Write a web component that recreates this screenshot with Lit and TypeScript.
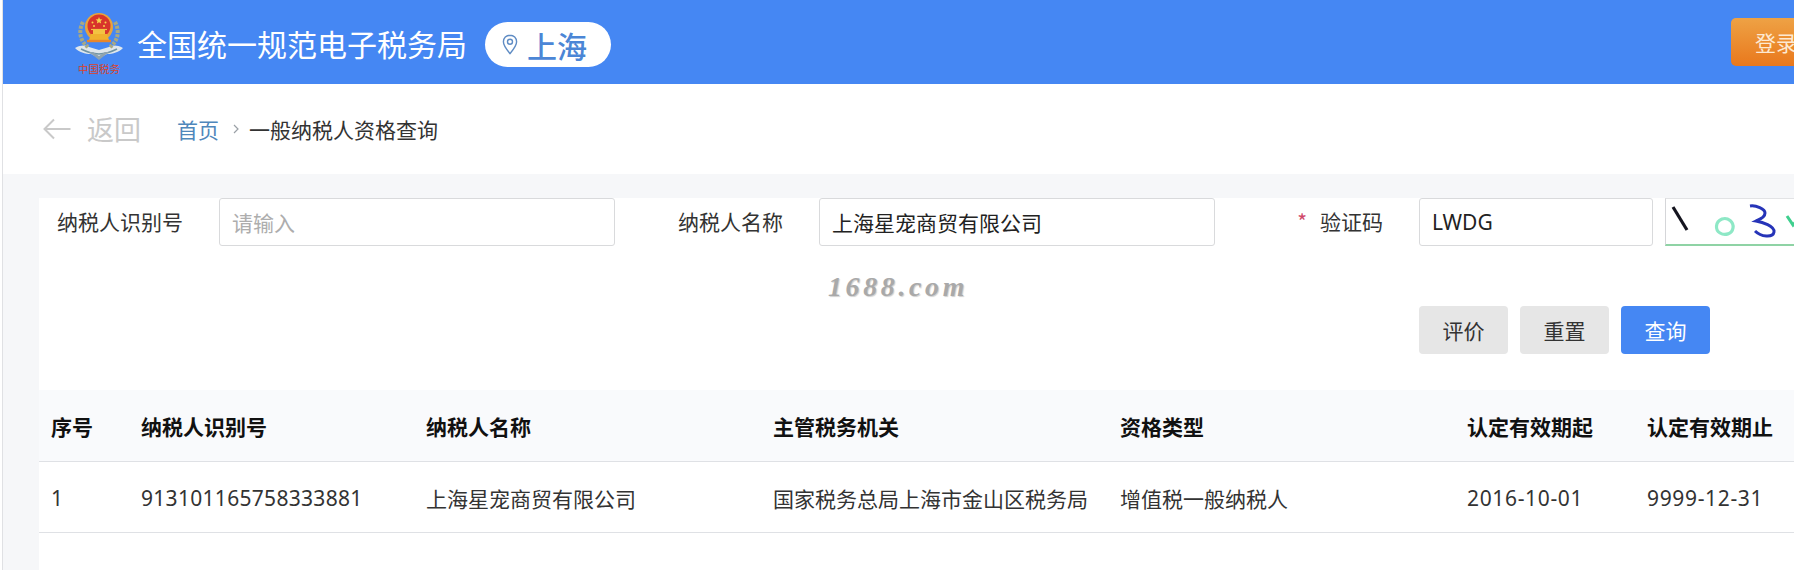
import { LitElement, html, css, svg } from "lit";
import { customElement } from "lit/decorators.js";

const headers = ["序号", "纳税人识别号", "纳税人名称", "主管税务机关", "资格类型", "认定有效期起", "认定有效期止"];
const row = [
  { text: "1", kind: "" },
  { text: "913101165758333881", kind: "id" },
  { text: "上海星宠商贸有限公司", kind: "" },
  { text: "国家税务总局上海市金山区税务局", kind: "" },
  { text: "增值税一般纳税人", kind: "" },
  { text: "2016-10-01", kind: "date" },
  { text: "9999-12-31", kind: "date" },
];

const emblem = svg`
<svg class="emblem" viewBox="0 0 48 62" width="48" height="62" aria-hidden="true">
  <path d="M0 35 C6 32 10 32 14 34 L24 37 L34 34 C38 32 42 32 48 35 C44 39 38 41 32 41 L24 45 L16 41 C10 41 4 39 0 35Z" fill="#dfe7ec"/>
  <path d="M6 36 C12 39 18 41 24 41 C30 41 36 39 42 36" fill="none" stroke="#6f93a3" stroke-width="1.6"/>
  <path d="M14 39 L24 47 L34 39 L30 39 L24 43 L18 39Z" fill="#8fa3ae"/>
  <path d="M8 9 C3 18 5 28 13 34" fill="none" stroke="#a8a983" stroke-width="4" stroke-dasharray="3 1.2"/>
  <path d="M40 9 C45 18 43 28 35 34" fill="none" stroke="#a8a983" stroke-width="4" stroke-dasharray="3 1.2"/>
  <circle cx="24" cy="14" r="14" fill="#e9a33b"/>
  <circle cx="24" cy="13" r="11.5" fill="#d8352c"/>
  <path d="M16 21 L32 21 L34 27 L14 27Z" fill="#f0b12e"/>
  <path d="M18 17 H30 V21 H18Z" fill="#f3c342"/>
  <path d="M16 16.5 H32" stroke="#f3c342" stroke-width="1.2"/>
  <path d="M12 28 H36" stroke="#e8862a" stroke-width="2.4"/>
  <path d="M24 4 l1 2.2 2.4.3 -1.8 1.6 .5 2.4 -2.1-1.2 -2.1 1.2 .5-2.4 -1.8-1.6 2.4-.3Z" fill="#f7d34a"/>
  <circle cx="17.5" cy="9.5" r="1" fill="#f7d34a"/><circle cx="30.5" cy="9.5" r="1" fill="#f7d34a"/>
  <circle cx="19" cy="13" r="1" fill="#f7d34a"/><circle cx="29" cy="13" r="1" fill="#f7d34a"/>
  <text x="24" y="60" text-anchor="middle" font-size="10" textLength="42" lengthAdjust="spacingAndGlyphs" fill="#d9432c" font-family="'Noto Sans CJK SC', sans-serif">中国税务</text>
</svg>`;

const pin = svg`
<svg class="pin" viewBox="0 0 16 21" width="16" height="21" aria-hidden="true">
  <path d="M8 1.2 C4.2 1.2 1.4 4.1 1.4 7.8 C1.4 12 5.6 16.6 8 19.6 C10.4 16.6 14.6 12 14.6 7.8 C14.6 4.1 11.8 1.2 8 1.2Z" fill="none" stroke="#5f8cc4" stroke-width="1.4"/>
  <circle cx="8" cy="7.8" r="2.5" fill="none" stroke="#5f8cc4" stroke-width="1.4"/>
</svg>`;

const backArrow = svg`
<svg class="back-arrow" viewBox="0 0 28 22" width="28" height="22" aria-hidden="true">
  <path d="M11 1.5 L1.5 11 L11 20.5 M1.5 11 H27.5" fill="none" stroke="#c9c9c9" stroke-width="2"/>
</svg>`;

const chevron = svg`
<svg class="chev" viewBox="0 0 8 12" width="8" height="12" aria-hidden="true">
  <path d="M2 2 L6 6 L2 10" fill="none" stroke="#9aa0a6" stroke-width="1.2"/>
</svg>`;

const captcha = svg`
<svg class="captcha-art" viewBox="0 0 129 48" width="129" height="48" aria-hidden="true">
  <path d="M7 9 L21 32" stroke="#15151f" stroke-width="3.2" fill="none"/>
  <path d="M56 21 C62 19 68 24 67 30 C66 36 59 38 54 35 C49 32 49 24 56 21Z" stroke="#8ee8c6" stroke-width="3.2" fill="none"/>
  <path d="M84 8 C90 7 99 11 99 15 C99 20 92 22 90 23 C96 24 109 28 108 34 C107 40 95 39 89 33" stroke="#2634b8" stroke-width="3" fill="none"/>
  <path d="M121 18 L127 27 L133 20" stroke="#3fcf8e" stroke-width="3" fill="none"/>
</svg>`;

@customElement("app-root")
export class AppRoot extends LitElement {
  static styles = css`
    :host {
      display: block;
      width: 1794px;
      height: 570px;
      overflow: hidden;
      background: #fff;
      font-family: "Noto Sans", "Noto Sans CJK SC", sans-serif;
      font-size: 21px;
      color: #333;
    }
    .page {
      display: flex;
      flex-direction: column;
      height: 570px;
      margin-left: 2px;
      border-left: 1px solid #e0e1e4;
      background: #f6f7f9;
      position: relative;
    }
    .header {
      flex: none;
      height: 84px;
      background: #4587f3;
      display: flex;
      align-items: center;
      padding-left: 72px;
      color: #fff;
    }
    .emblem { flex: none; display: block; margin-top: 4px; }
    .title { margin: 2px 0 0 14px; font-size: 30px; line-height: 40px; white-space: nowrap; font-family: "Noto Sans CJK SC", sans-serif; }
    .city {
      flex: none;
      margin: 5px 0 0 18px;
      width: 126px;
      height: 45px;
      border-radius: 23px;
      background: #fff;
      display: flex;
      align-items: center;
      box-sizing: border-box;
      padding-left: 17px;
      color: #4b86d6;
      font-size: 30px;
      font-weight: 500;
      font-family: "Noto Sans CJK SC", sans-serif;
    }
    .pin { flex: none; margin-right: 9px; }
    .login {
      flex: none;
      margin-left: auto;
      margin-right: -57px;
      width: 120px;
      height: 48px;
      box-sizing: border-box;
      border-radius: 5px;
      background: linear-gradient(#eea245, #e9781c);
      color: #fde9d2;
      display: flex;
      align-items: center;
      padding-left: 24px;
      font-size: 21px;
      font-family: "Noto Sans CJK SC", sans-serif;
    }
    .nav {
      flex: none;
      height: 90px;
      background: #fff;
      display: flex;
      align-items: center;
      padding-left: 40px;
      font-family: "Noto Sans CJK SC", sans-serif;
    }
    .back-arrow { flex: none; }
    .back { margin-left: 16px; font-size: 27px; color: #c9c9c9; line-height: 32px; }
    .crumb-home { margin-left: 36px; color: #4f87bb; }
    .chev { flex: none; margin: 0 9px 0 13px; }
    .crumb { color: #333; }
    .gap { flex: none; height: 24px; }
    .card {
      flex: 1;
      margin-left: 36px;
      background: #fff;
      overflow: hidden;
      position: relative;
    }
    .form { display: grid; grid-template-columns: 576px 576px 1fr; column-gap: 24px; }
    .item { display: flex; align-items: center; height: 48px; }
    .label {
      flex: none;
      width: 180px;
      box-sizing: border-box;
      padding: 0 36px 2px 0;
      text-align: right;
      white-space: nowrap;
      font-family: "Noto Sans CJK SC", sans-serif;
      color: #333;
    }
    .star { color: #d0486a; margin-right: 13px; }
    .input {
      flex: 1;
      min-width: 0;
      height: 48px;
      box-sizing: border-box;
      border: 1px solid #d9dadc;
      border-radius: 3px;
      background: #fff;
      display: flex;
      align-items: center;
      padding: 0 12px;
      color: #222;
      white-space: nowrap;
      font-family: "Noto Sans", "Noto Sans CJK SC", sans-serif;
    }
    .input.code { flex: none; width: 234px; }
    .placeholder { color: #adadad; }
    .captcha {
      flex: none;
      width: 140px;
      height: 48px;
      margin-left: 12px;
      box-sizing: border-box;
      border-left: 1px solid #d5d6d9;
      border-top: 1px solid #e2e3e5;
      border-bottom: 2px solid #8fd3a5;
      overflow: hidden;
    }
    .captcha-art { display: block; margin-top: -1px; }
    .actions {
      display: flex;
      justify-content: flex-end;
      gap: 12px;
      margin-top: 60px;
      padding-right: 84px;
    }
    .btn {
      width: 89px;
      height: 48px;
      border-radius: 4px;
      background: #e6e6e6;
      color: #333;
      display: flex;
      align-items: center;
      justify-content: center;
      font-family: "Noto Sans CJK SC", sans-serif;
    }
    .btn.primary { background: #4587f3; color: #fff; }
    .watermark {
      position: absolute;
      left: 789px;
      top: 73px;
      font-family: "Liberation Serif", serif;
      font-style: italic;
      font-weight: 700;
      font-size: 28px;
      letter-spacing: 3.6px;
      line-height: 32px;
      color: #a9a9a9;
      text-shadow: 1px 1px 1px #d0d0d0;
    }
    .table { margin-top: 36px; }
    .tr {
      display: grid;
      grid-template-columns: 90px 285px 347px 347px 347px 180px 1fr;
      height: 71px;
      box-sizing: border-box;
      border-bottom: 1px solid #dfe1e5;
      align-items: center;
    }
    .tr.head { height: 72px; background: #f9fafc; font-weight: 700; color: #111; }
    .cell { padding: 2px 0 0 12px; white-space: nowrap; }
    .cell.id { letter-spacing: 0.3px; }
    .cell.date { letter-spacing: 0.65px; }
    .head .cell { padding-top: 0; font-family: "Noto Sans CJK SC", sans-serif; }
  `;

  render() {
    return html`
      <div class="page">
        <header class="header">
          ${emblem}
          <div class="title">全国统一规范电子税务局</div>
          <div class="city">${pin}<span>上海</span></div>
          <div class="login">登录</div>
        </header>
        <nav class="nav">
          ${backArrow}
          <span class="back">返回</span>
          <span class="crumb-home">首页</span>
          ${chevron}
          <span class="crumb">一般纳税人资格查询</span>
        </nav>
        <div class="gap"></div>
        <main class="card">
          <div class="form">
            <div class="item">
              <div class="label">纳税人识别号</div>
              <div class="input"><span class="placeholder">请输入</span></div>
            </div>
            <div class="item">
              <div class="label">纳税人名称</div>
              <div class="input">上海星宠商贸有限公司</div>
            </div>
            <div class="item">
              <div class="label"><span class="star">*</span>验证码</div>
              <div class="input code">LWDG</div>
              <div class="captcha">${captcha}</div>
            </div>
          </div>
          <div class="watermark">1688.com</div>
          <div class="actions">
            <div class="btn">评价</div>
            <div class="btn">重置</div>
            <div class="btn primary">查询</div>
          </div>
          <div class="table">
            <div class="tr head">${headers.map((h) => html`<div class="cell">${h}</div>`)}</div>
            <div class="tr">${row.map((c) => html`<div class="cell ${c.kind}">${c.text}</div>`)}</div>
          </div>
        </main>
      </div>
    `;
  }
}
